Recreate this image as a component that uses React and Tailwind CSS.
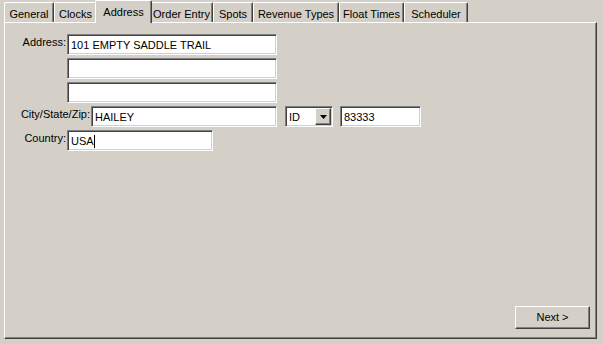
import React from 'react';

const tabs = [
  { label: 'General', w: 'w-[50px]' },
  { label: 'Clocks', w: 'w-[43px]' },
  { label: 'Address', w: 'w-[57px]', active: true },
  { label: 'Order Entry', w: 'w-[63px]' },
  { label: 'Spots', w: 'w-[40px]' },
  { label: 'Revenue Types', w: 'w-[86px]' },
  { label: 'Float Times', w: 'w-[65px]' },
  { label: 'Scheduler', w: 'w-[64px]' },
];

const sunken =
  'border border-t-[#808080] border-l-[#808080] border-b-white border-r-white shadow-[inset_1px_1px_0_#404040,inset_-1px_-1px_0_#d4d0c8] bg-white';

function Field({ value, width, caret }) {
  return (
    <div className={`${sunken} ${width} h-[21px] flex items-center pl-[3px] pt-[1px]`}>
      <span className="whitespace-nowrap leading-none">{value}</span>
      {caret && <span className="w-[1px] h-[13px] bg-black" />}
    </div>
  );
}

export default function App() {
  return (
    <div className="w-[603px] h-[344px] bg-[#d4d0c8] font-['Liberation_Sans',Arial,sans-serif] text-[11px] text-black overflow-hidden">
      {/* tab strip */}
      <div className="flex items-end h-[22px] pl-[4px]">
        {tabs.map((t) =>
          t.active ? (
            <div
              key={t.label}
              className={`${t.w} relative z-10 -mx-[2px] h-[23px] -mb-[1px] bg-[#d4d0c8] border-l border-t border-r border-l-white border-t-white border-r-[#404040] rounded-t-[2px] shadow-[inset_-1px_0_0_#808080] flex items-start justify-center pt-[3px] leading-[16px]`}
            >
              {t.label}
            </div>
          ) : (
            <div
              key={t.label}
              className={`${t.w} h-[20px] border-l border-t border-r border-l-white border-t-white border-r-[#404040] rounded-t-[2px] shadow-[inset_-1px_0_0_#808080] flex items-start justify-center pt-[3px] leading-[16px]`}
            >
              {t.label}
            </div>
          )
        )}
      </div>

      {/* panel */}
      <div className="ml-[4px] w-[593px] h-[317px] border border-t-white border-l-white border-r-[#404040] border-b-[#404040] shadow-[inset_-1px_-1px_0_#808080] flex flex-col pt-[11px] pr-[6px] pb-[9px]">
        <div className="flex flex-col gap-[3px]">
          <div className="flex items-start">
            <label className="w-[62px] text-right pr-[1px] pt-[3px] leading-none">Address:</label>
            <Field value="101 EMPTY SADDLE TRAIL" width="w-[210px]" />
          </div>
          <div className="flex pl-[62px]">
            <Field value="" width="w-[210px]" />
          </div>
          <div className="flex pl-[62px]">
            <Field value="" width="w-[210px]" />
          </div>
          <div className="flex items-start">
            <label className="w-[86px] text-right pr-[1px] pt-[3px] leading-none whitespace-nowrap">City/State/Zip:</label>
            <Field value="HAILEY" width="w-[186px]" />
            <div className={`${sunken} ml-[8px] w-[48px] h-[21px] flex items-center`}>
              <span className="flex-1 pl-[3px] pt-[1px] leading-none">ID</span>
              <div className="w-[16px] h-[17px] mr-[1px] bg-[#d4d0c8] border border-t-white border-l-white border-r-[#404040] border-b-[#404040] shadow-[inset_-1px_-1px_0_#808080] flex items-center justify-center">
                <svg width="7" height="4" viewBox="0 0 7 4">
                  <path d="M0 0h7L3.5 4z" fill="#000" />
                </svg>
              </div>
            </div>
            <div className="ml-[7px]">
              <Field value="83333" width="w-[81px]" />
            </div>
          </div>
          <div className="flex items-start">
            <label className="w-[62px] text-right pr-[1px] pt-[3px] leading-none">Country:</label>
            <Field value="USA" width="w-[146px]" caret />
          </div>
        </div>

        <div className="mt-auto flex justify-end">
          <button className="w-[75px] h-[23px] bg-[#d4d0c8] border border-t-white border-l-white border-r-[#404040] border-b-[#404040] shadow-[inset_-1px_-1px_0_#808080] flex items-center justify-center leading-none">
            Next &gt;
          </button>
        </div>
      </div>
    </div>
  );
}
